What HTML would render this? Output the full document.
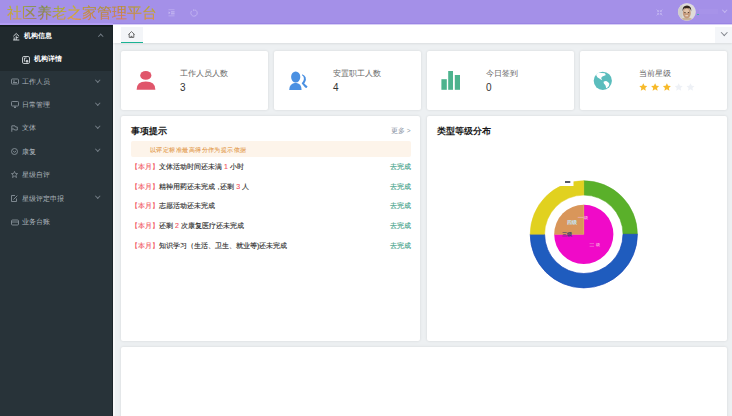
<!DOCTYPE html>
<html><head><meta charset="utf-8">
<style>
*{margin:0;padding:0;box-sizing:border-box;}
html,body{width:732px;height:416px;overflow:hidden;background:#edf0f2;font-family:"Liberation Sans",sans-serif;}
svg{position:absolute;overflow:visible;}
#hdr{position:absolute;left:0;top:0;width:732px;height:25px;background:#a490e8;}
#hdr .line{position:absolute;left:113px;top:23px;width:619px;height:1px;background:#9a85e4;}
#hdr .line2{position:absolute;left:113px;top:24px;width:619px;height:1px;background:#d9d0f7;}
#hdr .lline{position:absolute;left:0;top:23px;width:113px;height:2px;background:#b29cf3;}
#title{position:absolute;left:7px;top:3px;font-family:"Liberation Serif",serif;font-size:15px;line-height:20px;letter-spacing:0px;white-space:nowrap;font-weight:500;
 background:linear-gradient(180deg,rgba(150,180,30,0.45) 15%,rgba(235,130,100,0.5) 85%),linear-gradient(90deg,#c0b038 0%,#c4b040 8%,#7c8450 14%,#6a7650 24%,#a8a840 34%,#e0b830 44%,#c88040 54%,#b88040 63%,#d87048 74%,#c48848 84%,#c8a438 95%);
 -webkit-background-clip:text;background-clip:text;color:transparent;}
#side{position:absolute;left:0;top:25px;width:113px;height:391px;background:#283339;}
#side .topl{position:absolute;left:0;top:0;width:113px;height:2px;background:linear-gradient(180deg,#111a19,#1a2225);}
#side .open{position:absolute;left:0;top:0;width:113px;height:46.4px;background:#20292d;}
.mi{position:absolute;left:22px;font-size:7px;line-height:10px;color:#aeb6bd;white-space:nowrap;}
.mi.w{color:#fff;font-weight:bold;-webkit-text-stroke:0;}
.chev{position:absolute;width:3.5px;height:3.5px;border-right:1px solid #727c84;border-bottom:1px solid #727c84;transform:rotate(45deg);}
.chev.up{transform:rotate(-135deg);}
#tabs{position:absolute;left:113px;top:25px;width:619px;height:18px;background:#fff;box-shadow:0 0.5px 2px rgba(0,0,0,0.08);}
.card{position:absolute;background:#fff;border-radius:2px;box-shadow:0 0 3px rgba(0,0,0,0.11);}
.lbl{position:absolute;font-size:7.5px;line-height:10px;color:#666;white-space:nowrap;}
.num{position:absolute;font-size:10px;line-height:12px;color:#333;}
.ttl{position:absolute;font-size:9px;line-height:12px;font-weight:bold;color:#1a1a1a;white-space:nowrap;}
.row{position:absolute;left:131px;font-size:7px;line-height:10px;color:#2a2a2a;-webkit-text-stroke-width:0.12px;white-space:nowrap;}
.row .r{color:#f25560;}
.go{position:absolute;left:390px;font-size:7px;line-height:10px;color:#3a9c84;-webkit-text-stroke-width:0.12px;white-space:nowrap;}
</style></head>
<body>
<div id="hdr">
  <div id="title">社区养老之家管理平台</div>
  <div class="line"></div><div class="line2"></div><div class="lline"></div>
  <!-- indent icon -->
  <svg style="left:168px;top:8.5px;" width="7" height="8" viewBox="0 0 7 8"><g fill="#c9bdf3"><rect x="0.5" y="0.3" width="6" height="0.9" opacity="0.6"/><rect x="3" y="2.4" width="3.6" height="1"/><rect x="3" y="4.3" width="3.6" height="1"/><rect x="0.5" y="6.4" width="6" height="0.9" opacity="0.6"/><path d="M0.6 2.4L2.4 3.8L0.6 5.2Z"/></g></svg>
  <!-- refresh -->
  <svg style="left:189.8px;top:8.8px;" width="8" height="8" viewBox="0 0 8 8"><path d="M4.9 0.9A3.2 3.2 0 1 1 1.6 1.9" stroke="#c6b9f2" stroke-width="0.8" fill="none"/><path d="M3 0.2L4.9 0.9L3.5 2.2Z" fill="#c6b9f2"/></svg>
  <!-- fullscreen -->
  <svg style="left:655px;top:8px;" width="9" height="9" viewBox="0 0 9 9"><g stroke="#c4b8f1" stroke-width="0.8" fill="none"><path d="M1.6 1.6L3.6 3.6M3.6 2.2V3.6H2.2M7.4 1.6L5.4 3.6M5.4 2.2V3.6H6.8M1.6 7.4L3.6 5.4M2.2 5.4H3.6V6.8M7.4 7.4L5.4 5.4M6.8 5.4H5.4V6.8"/></g></svg>
  <!-- avatar -->
  <svg style="left:678px;top:3.4px;" width="18" height="18" viewBox="0 0 18 18">
    <defs><clipPath id="av"><circle cx="8.9" cy="8.9" r="8.7"/></clipPath></defs>
    <circle cx="8.9" cy="8.9" r="9" fill="#c9bdf0"/>
    <g clip-path="url(#av)">
      <rect x="0" y="0" width="18" height="18" fill="#dedcd8"/>
      <rect x="0" y="0" width="4.5" height="18" fill="#cfcdc9"/>
      <path d="M2.5 18 Q3.5 14.2 8.8 14.2 Q14 14.2 15.5 18Z" fill="#c8b49a"/>
      <ellipse cx="8.8" cy="10" rx="4" ry="5.4" fill="#c49a7c"/>
      <ellipse cx="8.6" cy="8" rx="2.6" ry="2.2" fill="#e2c4aa"/>
      <path d="M4.6 8.4 Q4 2.4 9 2.4 Q13.8 2.6 13.2 8.6 Q12.6 5.8 11.8 5.4 Q9 4.6 6 5.4 Q5 6.2 4.6 8.4Z" fill="#33261e"/>
      <rect x="6.3" y="9" width="1.3" height="0.8" fill="#3a2a22"/>
      <rect x="9.8" y="9" width="1.3" height="0.8" fill="#3a2a22"/>
      <rect x="7.2" y="12.3" width="3" height="0.9" rx="0.4" fill="#efe0d2"/>
    </g>
  </svg>
  <div style="position:absolute;left:697px;top:13.6px;width:1.6px;height:1.6px;border-radius:50%;background:#38b0a8;"></div>
  <div style="position:absolute;left:699px;top:9px;width:19px;height:5px;background:#a793e9;"></div>
  <div class="chev" style="left:722.5px;top:8px;border-color:#c3b6f0;"></div>
</div>

<div id="side">
  <div class="open"></div><div class="topl"></div>
  <!-- icons -->
  <svg style="left:12.7px;top:7.6px;" width="7" height="8" viewBox="0 0 7 8"><g stroke="#dde1e4" stroke-width="0.9" fill="none"><path d="M0.3 3.3L3.2 0.5L6.1 3.3M0.2 7H6.3M3.2 2.6V7M3.2 4.6H5.3M1.2 4.4V7"/></g></svg>
  <div class="mi w" style="left:24px;top:6px;">机构信息</div>
  <div class="chev up" style="left:98.5px;top:10px;"></div>
  <svg style="left:22px;top:30.8px;" width="8" height="8" viewBox="0 0 8 8"><g stroke="#d6dade" stroke-width="0.9" fill="none"><rect x="0.5" y="0.5" width="7" height="7" rx="1.4"/><path d="M2.4 2V5.6M2.4 2H4.6"/><circle cx="5" cy="5.2" r="1" fill="#d6dade"/></g></svg>
  <div class="mi w" style="left:34px;top:29px;">机构详情</div>

  <svg style="left:10.5px;top:53px;" width="8" height="7" viewBox="0 0 8 7"><g stroke="#879198" stroke-width="0.9" fill="none"><rect x="0.5" y="1" width="7" height="5" rx="0.8"/><path d="M2 3H4M2 4.5H6"/></g></svg>
  <div class="mi" style="top:52px;">工作人员</div>
  <div class="chev" style="left:96px;top:52.5px;"></div>

  <svg style="left:10.5px;top:76px;" width="8" height="7" viewBox="0 0 8 7"><g stroke="#879198" stroke-width="0.9" fill="none"><rect x="0.5" y="0.5" width="7" height="4.5" rx="0.8"/><path d="M3 6.5H5M4 5V6.5"/></g></svg>
  <div class="mi" style="top:75px;">日常管理</div>
  <div class="chev" style="left:96px;top:75.5px;"></div>

  <svg style="left:10.5px;top:99.5px;" width="7" height="7" viewBox="0 0 7 7"><g stroke="#879198" stroke-width="0.9" fill="none"><path d="M0.8 6.8V0.8H4L4.5 2H6.3V5H3.5L3 4H0.8"/></g></svg>
  <div class="mi" style="top:98px;">文体</div>
  <div class="chev" style="left:96px;top:98.5px;"></div>

  <svg style="left:10.5px;top:123px;" width="7" height="7" viewBox="0 0 7 7"><g stroke="#879198" stroke-width="0.9" fill="none"><circle cx="3.5" cy="3.5" r="3"/><path d="M2 2.8L3.5 4.3L5 3"/></g></svg>
  <div class="mi" style="top:122px;">康复</div>
  <div class="chev" style="left:96px;top:122px;"></div>

  <svg style="left:10.5px;top:146px;" width="7" height="7" viewBox="0 0 7 7"><path d="M3.5 0.4L4.4 2.5L6.6 2.6L4.9 4L5.5 6.5L3.5 5.2L1.5 6.5L2.1 4L0.4 2.6L2.6 2.5Z" stroke="#879198" stroke-width="0.8" fill="none" stroke-linejoin="round"/></svg>
  <div class="mi" style="top:145px;">星级自评</div>

  <svg style="left:10.5px;top:170px;" width="7" height="7" viewBox="0 0 7 7"><g stroke="#879198" stroke-width="0.9" fill="none"><path d="M5.5 3.5V6.5H0.5V0.5H4"/><path d="M2.5 4.5L6.3 0.7"/></g></svg>
  <div class="mi" style="top:169px;">星级评定申报</div>
  <div class="chev" style="left:96px;top:169px;"></div>

  <svg style="left:10.5px;top:193.5px;" width="8" height="7" viewBox="0 0 8 7"><g stroke="#879198" stroke-width="0.9" fill="none"><rect x="0.5" y="1" width="7" height="5" rx="1"/><path d="M0.5 3H7.5"/></g></svg>
  <div class="mi" style="top:192px;">业务台账</div>
</div>

<div style="position:absolute;left:112px;top:25px;width:1px;height:391px;background:#1b2429;"></div>
<div style="position:absolute;left:113px;top:43px;width:1.5px;height:373px;background:#f6f7f8;"></div>
<div id="tabs">
  <div style="position:absolute;left:8px;top:1.7px;width:22px;height:16.3px;background:#f3f5f8;"></div>
  <div style="position:absolute;left:8px;top:16.6px;width:22px;height:1.5px;background:#1ab394;"></div>
  <svg style="left:15px;top:6px;" width="7" height="7" viewBox="0 0 7 7"><g stroke="#444" stroke-width="0.75" fill="none" stroke-linejoin="round"><path d="M0.4 3.6L3.5 0.6L6.6 3.6M1.2 2.9V6.4H5.8V2.9M2.6 6.4L3.5 4.9L4.4 6.4"/></g></svg>
  <div style="position:absolute;left:601.7px;top:2px;width:17.3px;height:16px;background:#f4f6f9;"></div>
  <div class="chev" style="left:609px;top:4.6px;width:4.5px;height:4.5px;border-color:#80858c;border-width:0 1.2px 1.2px 0;"></div>
</div>

<!-- stat cards -->
<div class="card" style="left:121px;top:51px;width:147px;height:59px;"></div>
<div class="card" style="left:274px;top:51px;width:147px;height:59px;"></div>
<div class="card" style="left:427px;top:51px;width:147px;height:59px;"></div>
<div class="card" style="left:580px;top:51px;width:147px;height:59px;"></div>

<svg style="left:136px;top:70px;" width="20" height="20" viewBox="0 0 20 20"><g fill="#e0566b"><ellipse cx="9.8" cy="5.4" rx="5.6" ry="4.4"/><path d="M0.6 19.8 Q0.6 11.6 9.8 11.6 Q19.4 11.6 19.4 19.8Z"/></g></svg>
<svg style="left:289px;top:70px;" width="20" height="20" viewBox="0 0 20 20"><g fill="#4a90e2"><ellipse cx="6.7" cy="7" rx="4.6" ry="5.5"/><path d="M0.2 20 Q0.2 13.6 6.6 12.8 Q12.6 13.4 12.6 20Z"/><path d="M13.2 4.2 Q15.6 5 16.6 7.2 Q17.3 9.6 16.3 11.5 Q15.6 12.8 15.2 13.5 L18.6 16.5 L17.5 18.1 Q16.5 17.9 15.9 17.3 L13.6 14.6 Q12.6 13.6 12.8 13.1 Q13.8 12 14.4 10.8 Q15 9.6 14.9 8.5 Q14.8 6.9 14.2 6.2 Q13.6 5.6 13.1 5.4Z"/></g></svg>
<svg style="left:441px;top:70px;" width="20" height="20" viewBox="0 0 20 20"><g fill="#4db38e"><rect x="0.4" y="9.2" width="5.4" height="10.6"/><rect x="7.2" y="1" width="4.8" height="18.8"/><rect x="13.8" y="5" width="5.2" height="14.8"/></g></svg>
<svg style="left:593px;top:71px;" width="20" height="20" viewBox="0 0 20 20"><circle cx="9.8" cy="9.8" r="9.1" fill="#5bbdbd"/><g fill="#fff"><path d="M3 3.8 Q4 2.2 5.5 1.7 L11.7 2.3 Q13 3.2 12.5 4.2 L9.4 5.6 Q8 6.5 8.3 7.4 L9.2 9.2 Q8.2 9 7.4 8.3 Q6 7 4.6 6.4 Q3.5 5.2 3 3.8Z"/><path d="M10.8 10.6 Q12.2 9.9 13.8 10.2 Q15.8 11.2 16.4 12.8 Q16.2 14.6 15.3 15.7 Q14.2 16.8 13.1 17.2 Q12.9 15.8 12.5 14.6 Q11.8 13.4 10.9 12.6 Q10.4 11.6 10.8 10.6Z"/></g></svg>

<div class="lbl" style="left:180px;top:68.5px;">工作人员人数</div>
<div class="num" style="left:180px;top:82.3px;">3</div>
<div class="lbl" style="left:333px;top:68.5px;">安置职工人数</div>
<div class="num" style="left:333px;top:82.3px;">4</div>
<div class="lbl" style="left:486px;top:68.5px;">今日签到</div>
<div class="num" style="left:486px;top:82.3px;">0</div>
<div class="lbl" style="left:639px;top:68.5px;">当前星级</div>
<svg style="left:638.6px;top:82.7px;" width="56" height="9" viewBox="0 0 56 9">
  <defs><path id="st" d="M0 -4L1.25 -1.45L4 -1.25L1.95 0.6L2.5 3.4L0 2L-2.5 3.4L-1.95 0.6L-4 -1.25L-1.25 -1.45Z" stroke-linejoin="round"/></defs>
  <use href="#st" x="4.3" y="4.3" fill="#f7ba2a"/>
  <use href="#st" x="16.1" y="4.3" fill="#f7ba2a"/>
  <use href="#st" x="27.9" y="4.3" fill="#f7ba2a"/>
  <use href="#st" x="39.7" y="4.3" fill="#eef1f6"/>
  <use href="#st" x="51.5" y="4.3" fill="#eef1f6"/>
</svg>

<!-- row 2 -->
<div class="card" style="left:121px;top:116px;width:299px;height:225px;"></div>
<div class="card" style="left:427px;top:116px;width:300px;height:225px;"></div>
<div class="card" style="left:121px;top:347px;width:606px;height:80px;"></div>

<div class="ttl" style="left:131px;top:125px;">事项提示</div>
<div style="position:absolute;left:391px;top:125.5px;font-size:6.5px;line-height:10px;color:#8a93a3;white-space:nowrap;">更多 &gt;</div>
<div style="position:absolute;left:131px;top:141.4px;width:280px;height:15.8px;background:#fdf4ea;border-radius:2px;"></div>
<div style="position:absolute;left:150px;top:144.7px;font-size:6.4px;line-height:10px;color:#e49c50;letter-spacing:0.45px;-webkit-text-stroke-width:0.1px;white-space:nowrap;">以评定标准最高得分作为提示依据</div>

<div class="row" style="top:161.8px;"><span class="r">【本月】</span>文体活动时间还未满 <span class="r">1</span> 小时</div>
<div class="go" style="top:161.8px;">去完成</div>
<div class="row" style="top:181.6px;"><span class="r">【本月】</span>精神用药还未完成<span style="letter-spacing:-1.8px">，</span>还剩 <span class="r">3</span> 人</div>
<div class="go" style="top:181.6px;">去完成</div>
<div class="row" style="top:201.3px;"><span class="r">【本月】</span>志愿活动还未完成</div>
<div class="go" style="top:201.3px;">去完成</div>
<div class="row" style="top:221px;"><span class="r">【本月】</span>还剩 <span class="r">2</span> 次康复医疗还未完成</div>
<div class="go" style="top:221px;">去完成</div>
<div class="row" style="top:240.6px;"><span class="r">【本月】</span>知识学习（生活、卫生、就业等)还未完成</div>
<div class="go" style="top:240.6px;">去完成</div>

<div class="ttl" style="left:437px;top:125px;">类型等级分布</div>

<!-- chart -->
<svg style="left:0;top:0;" width="732" height="416" viewBox="0 0 732 416">
  <g transform="translate(583.8,234.3)">
    <path d="M0 -53.6A53.6 53.6 0 0 1 53.6 0L39.2 0A39.2 39.2 0 0 0 0 -39.2Z" fill="#5ab02a" stroke="#52a624" stroke-width="0.5"/>
    <path d="M53.6 0A53.6 53.6 0 0 1 -53.6 0L-39.2 0A39.2 39.2 0 0 0 39.2 0Z" fill="#1f5cbe" stroke="#1848b8" stroke-width="0.7"/>
    <path d="M-53.6 0A53.6 53.6 0 0 1 0 -53.6L0 -39.2A39.2 39.2 0 0 0 -39.2 0Z" fill="#e1d11f" stroke="#e0cc20" stroke-width="0.5"/>
    <path d="M0 0L0 -29.6A29.6 29.6 0 1 1 -29.6 0Z" fill="#f00ac8"/>
    <path d="M0 0L-29.6 0A29.6 29.6 0 0 1 0 -29.6Z" fill="#d9965a"/>
    <path d="M-29.6 0H0V-29.6" stroke="#d8b040" stroke-width="0.5" fill="none"/>
  </g>
  <rect x="558" y="176" width="15.5" height="10" fill="#fff"/>
  <rect x="565" y="181" width="5.3" height="2" fill="#555a66"/>
  <path d="M577.7 217.4H583.6" stroke="#f0b8dc" stroke-width="0.6"/>
  <path d="M589.6 243.6H594M589.6 246.3H594" stroke="#f0a0d8" stroke-width="0.5"/>
</svg>
<div style="position:absolute;left:584.3px;top:214.8px;font-size:4.2px;line-height:6px;color:#fbe8e0;white-space:nowrap;">级</div>
<div style="position:absolute;left:567px;top:219px;font-size:5px;line-height:6px;color:#c4e6f6;font-weight:bold;white-space:nowrap;">四级</div>
<div style="position:absolute;left:562px;top:230.5px;font-size:5px;line-height:6px;color:#304068;font-weight:bold;white-space:nowrap;">三级</div>
<div style="position:absolute;left:595.8px;top:241.6px;font-size:4.2px;line-height:6px;color:#fbe8e0;white-space:nowrap;">级</div>
</body></html>
